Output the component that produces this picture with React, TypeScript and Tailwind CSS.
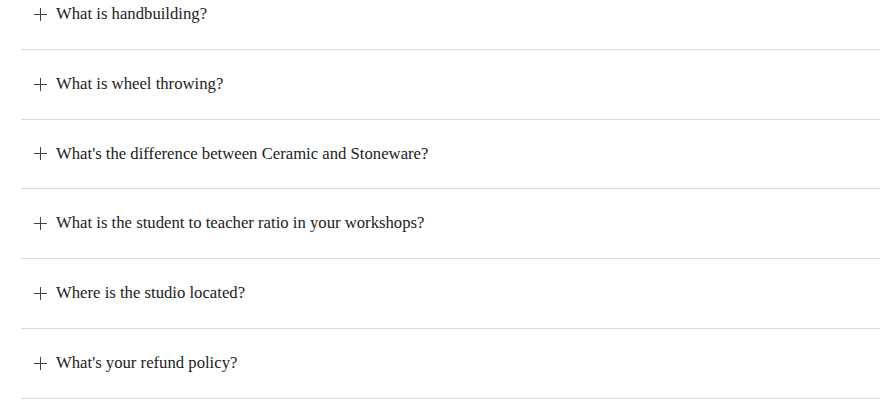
import React from 'react';

const QUESTIONS = [
  'What is handbuilding?',
  'What is wheel throwing?',
  "What's the difference between Ceramic and Stoneware?",
  'What is the student to teacher ratio in your workshops?',
  'Where is the studio located?',
  "What's your refund policy?",
];

function PlusIcon() {
  return (
    <svg width="13" height="13" viewBox="0 0 13 13" className="shrink-0 text-[#444]">
      <path d="M6.5 0v13M0 6.5h13" stroke="currentColor" strokeWidth="1" fill="none" />
    </svg>
  );
}

export default function App() {
  return (
    <div className="h-[400px] w-[880px] overflow-hidden bg-white">
      <div className="-mt-[20px] ml-[21px] flex flex-col">
        {QUESTIONS.map((q) => (
          <button
            key={q}
            className="flex h-[69.75px] items-center gap-[9px] border-b border-[#d9d9d9] pl-[13px] text-left"
          >
            <PlusIcon />
            <span className="font-['Liberation_Serif',serif] text-[16.7px] leading-none text-[#222]">{q}</span>
          </button>
        ))}
      </div>
    </div>
  );
}
